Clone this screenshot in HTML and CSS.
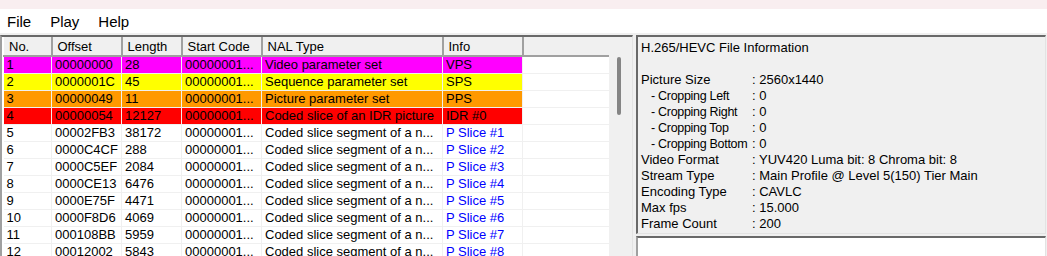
FILE: index.html
```html
<!DOCTYPE html>
<html lang="en">
<head>
  <meta charset="UTF-8" />
  <title>H.265/HEVC Bitstream Viewer</title>
  <link rel="stylesheet" href="styles.css">
</head>
<body>

  <div class="titlebar"></div>

  <nav class="menubar">
    <span>File</span>
    <span>Play</span>
    <span>Help</span>
  </nav>

  <main class="workspace">
    <section class="nal-list">
      <div class="list-body">
        <table class="nal-table">
          <colgroup>
            <col style="width:48px"><col style="width:70px"><col style="width:60px"><col style="width:80px">
            <col style="width:181px"><col style="width:80px"><col style="width:88px">
          </colgroup>
          <thead>
            <tr><th>No.</th><th>Offset</th><th>Length</th><th>Start Code</th><th>NAL Type</th><th>Info</th><th></th></tr>
          </thead>
          <tbody>
            <tr class="vps"><td>1</td><td>00000000</td><td>28</td><td>00000001...</td><td>Video parameter set</td><td>VPS</td><td class="blank"></td></tr>
            <tr class="sps"><td>2</td><td>0000001C</td><td>45</td><td>00000001...</td><td>Sequence parameter set</td><td>SPS</td><td class="blank"></td></tr>
            <tr class="pps"><td>3</td><td>00000049</td><td>11</td><td>00000001...</td><td>Picture parameter set</td><td>PPS</td><td class="blank"></td></tr>
            <tr class="idr"><td>4</td><td>00000054</td><td>12127</td><td>00000001...</td><td>Coded slice of an IDR picture</td><td>IDR #0</td><td class="blank"></td></tr>
            <tr><td>5</td><td>00002FB3</td><td>38172</td><td>00000001...</td><td>Coded slice segment of a n...</td><td class="slice">P Slice #1</td><td></td></tr>
            <tr><td>6</td><td>0000C4CF</td><td>288</td><td>00000001...</td><td>Coded slice segment of a n...</td><td class="slice">P Slice #2</td><td></td></tr>
            <tr><td>7</td><td>0000C5EF</td><td>2084</td><td>00000001...</td><td>Coded slice segment of a n...</td><td class="slice">P Slice #3</td><td></td></tr>
            <tr><td>8</td><td>0000CE13</td><td>6476</td><td>00000001...</td><td>Coded slice segment of a n...</td><td class="slice">P Slice #4</td><td></td></tr>
            <tr><td>9</td><td>0000E75F</td><td>4471</td><td>00000001...</td><td>Coded slice segment of a n...</td><td class="slice">P Slice #5</td><td></td></tr>
            <tr><td>10</td><td>0000F8D6</td><td>4069</td><td>00000001...</td><td>Coded slice segment of a n...</td><td class="slice">P Slice #6</td><td></td></tr>
            <tr><td>11</td><td>000108BB</td><td>5959</td><td>00000001...</td><td>Coded slice segment of a n...</td><td class="slice">P Slice #7</td><td></td></tr>
            <tr><td>12</td><td>00012002</td><td>5843</td><td>00000001...</td><td>Coded slice segment of a n...</td><td class="slice">P Slice #8</td><td></td></tr>
          </tbody>
        </table>
      </div>
      <div class="vscroll"><div class="thumb"></div></div>
    </section>

    <aside class="side">
      <div class="file-info">
        <p class="info-title">H.265/HEVC File Information</p>
        <dl class="info-grid">
          <dt>Picture Size</dt><dd>: 2560x1440</dd>
          <dt class="sub">- Cropping Left</dt><dd>: 0</dd>
          <dt class="sub">- Cropping Right</dt><dd>: 0</dd>
          <dt class="sub">- Cropping Top</dt><dd>: 0</dd>
          <dt class="sub">- Cropping Bottom</dt><dd>: 0</dd>
          <dt>Video Format</dt><dd>: YUV420 Luma bit: 8 Chroma bit: 8</dd>
          <dt>Stream Type</dt><dd>: Main Profile @ Level 5(150) Tier Main</dd>
          <dt>Encoding Type</dt><dd>: CAVLC</dd>
          <dt>Max fps</dt><dd>: 15.000</dd>
          <dt>Frame Count</dt><dd>: 200</dd>
        </dl>
      </div>
      <div class="log-box"></div>
    </aside>
  </main>

</body>
</html>
```

FILE: styles.css
```css
* { margin: 0; padding: 0; box-sizing: border-box; }

html, body {
  width: 1047px;
  height: 256px;
  overflow: hidden;
}

body {
  font-family: 'Liberation Sans', Arial, sans-serif;
  font-size: 13px;
  color: #000;
  background-color: #f0f0f0;
}

.titlebar {
  height: 9px;
  background-color: #f9eef0;
}

/* Menu */
.menubar {
  height: 24px;
  background-color: #fff;
  display: flex;
  align-items: center;
  gap: 19px;
  padding-left: 7px;
  font-size: 15px;
}

.workspace {
  display: flex;
  gap: 3px;
  margin-top: 2px;
  height: 221px;
}

/* NAL list */
.nal-list {
  width: 633px;
  display: flex;
  border-top: 2px solid #696969;
  border-left: 2px solid #a0a0a0;
  border-right: 1px solid #e3e3e3;
  background-color: #fff;
}

.list-body {
  width: 607px;
  overflow: hidden;
  background-color: #fff;
  padding-left: 1px;
}

.nal-table {
  table-layout: fixed;
  border-collapse: collapse;
  width: 607px;
}

.nal-table th {
  height: 19px;
  background-color: #f0f0f0;
  font-weight: normal;
  text-align: left;
  padding-left: 5px;
  border-right: 2px solid #a0a0a0;
  border-left: 1px solid #fff;
  border-bottom: 2px solid #a0a0a0;
  white-space: nowrap;
}

.nal-table th:last-child { border-right: 1px solid #fff; }

.nal-table td {
  height: 17px;
  padding-left: 3px;
  border-right: 1px solid #f0f0f0;
  border-bottom: 1px solid #f0f0f0;
  white-space: nowrap;
  overflow: hidden;
}

.nal-table tbody tr:first-child td { border-top: 1px solid #fff; }

.vps td { background-color: #ff00ff; }
.sps td { background-color: #ffff00; }
.pps td { background-color: #ff9900; }
.idr td { background-color: #ff0000; }
.nal-table td.blank { background-color: #fff; }

.slice { color: #0000ff; }

.vscroll {
  width: 23px;
  background-color: #f0f0f0;
  position: relative;
}

.vscroll .thumb {
  position: absolute;
  left: 8px;
  top: 20px;
  width: 4px;
  height: 58px;
  border-radius: 2px;
  background-color: #858585;
}

/* Right panel */
.side {
  width: 410px;
  display: flex;
  flex-direction: column;
  gap: 2px;
}

.file-info {
  height: 199px;
  border-top: 2px solid #696969;
  border-left: 2px solid #696969;
  border-right: 1px solid #e3e3e3;
  border-bottom: 1px solid #e3e3e3;
  background-color: #f0f0f0;
  padding: 3px 0 0 3px;
  line-height: 16px;
}

.info-title { margin-bottom: 16px; }

.info-grid {
  display: grid;
  grid-template-columns: 111px 1fr;
  white-space: nowrap;
}

.info-grid dt.sub {
  padding-left: 10px;
  font-size: 12.5px;
  letter-spacing: -0.3px;
}

.log-box {
  flex: 1;
  border-top: 2px solid #696969;
  border-left: 2px solid #a0a0a0;
  border-right: 1px solid #e3e3e3;
  background-color: #fff;
}
```
